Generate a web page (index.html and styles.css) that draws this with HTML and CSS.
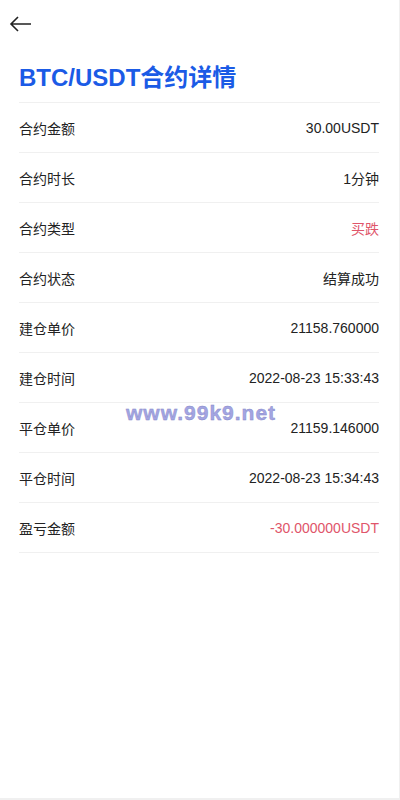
FILE: index.html
```html
<!DOCTYPE html>
<html lang="zh">
<head>
<meta charset="utf-8">
<link rel="stylesheet" href="styles.css">
</head>
<body>
<div class="page">
  <div class="topbar">
    <svg class="back" width="24" height="16" viewBox="0 0 24 16"><path d="M22 8H2M9 1L2 8l7 7" fill="none" stroke="#222" stroke-width="1.6"/></svg>
  </div>
  <h1 class="title">BTC/USDT合约详情</h1>
  <div class="list">
    <div class="row"><span>合约金额</span><span>30.00USDT</span></div>
    <div class="row"><span>合约时长</span><span>1分钟</span></div>
    <div class="row"><span>合约类型</span><span class="red">买跌</span></div>
    <div class="row"><span>合约状态</span><span>结算成功</span></div>
    <div class="row"><span>建仓单价</span><span>21158.760000</span></div>
    <div class="row"><span>建仓时间</span><span>2022-08-23 15:33:43</span></div>
    <div class="row"><span>平仓单价</span><span>21159.146000</span></div>
    <div class="row"><span>平仓时间</span><span>2022-08-23 15:34:43</span></div>
    <div class="row"><span>盈亏金额</span><span class="red">-30.000000USDT</span></div>
  </div>
  <div class="watermark">www.99k9.net</div>
</div>
</body>
</html>
```
FILE: styles.css
```css
html, body { margin: 0; padding: 0; }
body {
  background: #f0f0f0;
  font-family: "Liberation Sans", Arial, "Noto Sans CJK SC", sans-serif;
  color: #222;
}
.page {
  position: relative;
  width: 399px;
  height: 798px;
  background: #fff;
}
.topbar {
  height: 46px;
  display: flex;
  align-items: center;
  padding-left: 9px;
}
.back { display: block; margin-top: 1px; }
.title {
  margin: 0 19px;
  height: 56px;
  line-height: 64px;
  font-size: 24px;
  font-weight: bold;
  color: #1b5be6;
  border-bottom: 1px solid #f0f0f0;
}
.list { margin: 0 20px 0 19px; }
.row {
  height: 49px;
  border-bottom: 1px solid #f0f0f0;
  display: flex;
  justify-content: space-between;
  align-items: center;
  font-size: 14px;
  color: #222;
}
.red { color: #e0556a; }
.watermark {
  position: absolute;
  left: 126px;
  top: 401px;
  font-size: 21px;
  font-weight: bold;
  color: #a3a5e2;
  -webkit-text-stroke: 0.4px #8587c8;
  letter-spacing: 1px;
}
```
